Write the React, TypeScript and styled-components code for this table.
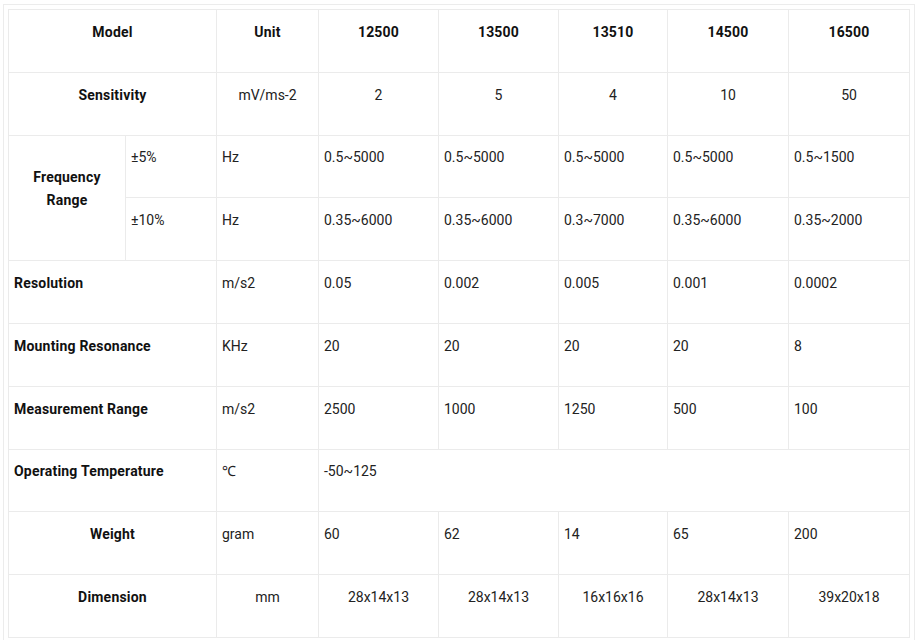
import React from "react";
import styled, { createGlobalStyle } from "styled-components";

const Global = createGlobalStyle`
  html, body { margin: 0; padding: 0; background: #fff; }
  body { font-family: Roboto, "Liberation Sans", Arial, sans-serif; }
`;

const Frame = styled.div`
  box-sizing: border-box;
  width: 912px;
  margin: 4px 0 0 3px;
  padding: 4px 5px 20px 4px;
  border: 1px solid #ececec;
  border-bottom: none;
`;

const Table = styled.table`
  width: 901px;
  table-layout: fixed;
  border-collapse: collapse;
  font-size: 14px;
  color: #222;
`;

const Cell = styled.td<{ $center?: boolean; $bold?: boolean }>`
  border: 1px solid #ebebeb;
  padding: 10.8px 5px 28px 5px;
  line-height: 23px;
  vertical-align: middle;
  text-align: ${(p) => (p.$center ? "center" : "left")};
  font-weight: ${(p) => (p.$bold ? 700 : 400)};
  letter-spacing: ${(p) => (p.$bold ? "0.2px" : "0")};
  color: ${(p) => (p.$bold ? "#111" : "#222")};
  white-space: nowrap;
`;

const widths = [117, 91, 102, 120, 120, 109, 121, 121];
const models = ["12500", "13500", "13510", "14500", "16500"];

type Row = { label: string; unit: string; values: string[] };

const rows: Row[] = [
  { label: "Resolution", unit: "m/s2", values: ["0.05", "0.002", "0.005", "0.001", "0.0002"] },
  { label: "Mounting Resonance", unit: "KHz", values: ["20", "20", "20", "20", "8"] },
  { label: "Measurement Range", unit: "m/s2", values: ["2500", "1000", "1250", "500", "100"] },
];

export default function App() {
  return (
    <>
      <Global />
      <Frame>
        <Table>
          <colgroup>
            {widths.map((w, i) => (
              <col key={i} style={{ width: w }} />
            ))}
          </colgroup>
          <tbody>
            <tr>
              <Cell colSpan={2} $center $bold>Model</Cell>
              <Cell $center $bold>Unit</Cell>
              {models.map((m) => (
                <Cell key={m} $center $bold>{m}</Cell>
              ))}
            </tr>
            <tr>
              <Cell colSpan={2} $center $bold>Sensitivity</Cell>
              <Cell $center>mV/ms-2</Cell>
              {["2", "5", "4", "10", "50"].map((v, i) => (
                <Cell key={i} $center>{v}</Cell>
              ))}
            </tr>
            <tr>
              <Cell rowSpan={2} $center $bold>Frequency<br />Range</Cell>
              <Cell>±5%</Cell>
              <Cell>Hz</Cell>
              {["0.5~5000", "0.5~5000", "0.5~5000", "0.5~5000", "0.5~1500"].map((v, i) => (
                <Cell key={i}>{v}</Cell>
              ))}
            </tr>
            <tr>
              <Cell>±10%</Cell>
              <Cell>Hz</Cell>
              {["0.35~6000", "0.35~6000", "0.3~7000", "0.35~6000", "0.35~2000"].map((v, i) => (
                <Cell key={i}>{v}</Cell>
              ))}
            </tr>
            {rows.map((r) => (
              <tr key={r.label}>
                <Cell colSpan={2} $bold>{r.label}</Cell>
                <Cell>{r.unit}</Cell>
                {r.values.map((v, i) => (
                  <Cell key={i}>{v}</Cell>
                ))}
              </tr>
            ))}
            <tr>
              <Cell colSpan={2} $bold>Operating Temperature</Cell>
              <Cell>℃</Cell>
              <Cell colSpan={5}>-50~125</Cell>
            </tr>
            <tr>
              <Cell colSpan={2} $center $bold>Weight</Cell>
              <Cell>gram</Cell>
              {["60", "62", "14", "65", "200"].map((v, i) => (
                <Cell key={i}>{v}</Cell>
              ))}
            </tr>
            <tr>
              <Cell colSpan={2} $center $bold>Dimension</Cell>
              <Cell $center>mm</Cell>
              {["28x14x13", "28x14x13", "16x16x16", "28x14x13", "39x20x18"].map((v, i) => (
                <Cell key={i} $center>{v}</Cell>
              ))}
            </tr>
          </tbody>
        </Table>
      </Frame>
    </>
  );
}
